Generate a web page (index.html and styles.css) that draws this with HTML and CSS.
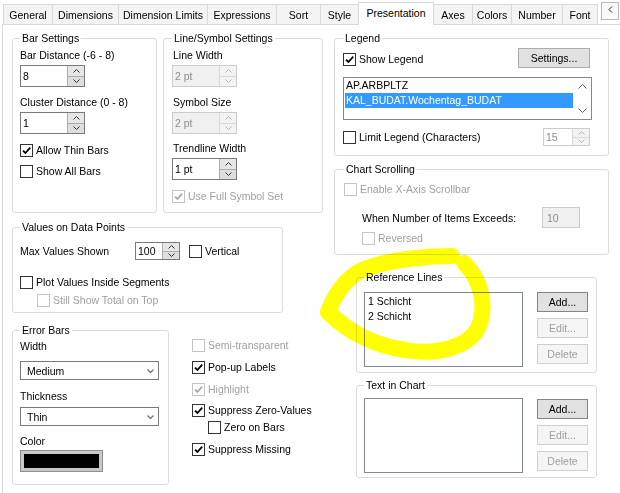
FILE: index.html
```html
<!DOCTYPE html>
<html>
<head>
<meta charset="utf-8">
<link rel="stylesheet" href="styles.css">
</head>
<body>
<div class="tabs">
  <div class="tab t-general">General</div>
  <div class="tab t-dims">Dimensions</div>
  <div class="tab t-dimlim">Dimension Limits</div>
  <div class="tab t-expr">Expressions</div>
  <div class="tab t-sort">Sort</div>
  <div class="tab t-style">Style</div>
  <div class="tab active t-pres">Presentation</div>
  <div class="tab t-axes">Axes</div>
  <div class="tab t-colors">Colors</div>
  <div class="tab t-number">Number</div>
  <div class="tab t-font">Font</div>
  <div class="scroll-btn"><svg width="5" height="7" viewBox="0 0 5 7"><path d="M4 0.5 1 3.5 4 6.5"/></svg></div>
</div>

<div class="page">
  <div class="col">
    <div class="row1">
      <fieldset class="box bar">
        <legend>Bar Settings</legend>
        <div class="lbl">Bar Distance (-6 - 8)</div>
        <div class="spin w65 mt3"><span class="val">8</span><span class="btns"><span class="sb"><svg viewBox="0 0 7 4"><path d="M0.5 3.5 3.5 0.5 6.5 3.5"/></svg></span><span class="sb"><svg viewBox="0 0 7 4"><path d="M0.5 0.5 3.5 3.5 6.5 0.5"/></svg></span></span></div>
        <div class="lbl mt9">Cluster Distance (0 - 8)</div>
        <div class="spin w65 mt3"><span class="val">1</span><span class="btns"><span class="sb"><svg viewBox="0 0 7 4"><path d="M0.5 3.5 3.5 0.5 6.5 3.5"/></svg></span><span class="sb"><svg viewBox="0 0 7 4"><path d="M0.5 0.5 3.5 3.5 6.5 0.5"/></svg></span></span></div>
        <div class="cbrow mt10"><span class="cb"><svg viewBox="0 0 11 11"><path d="M2 5.6 4.4 8 9.2 2.6"/></svg></span>Allow Thin Bars</div>
        <div class="cbrow mt8"><span class="cb"></span>Show All Bars</div>
      </fieldset>
      <fieldset class="box line">
        <legend>Line/Symbol Settings</legend>
        <div class="lbl">Line Width</div>
        <div class="spin w65 mt3 dis"><span class="val">2 pt</span><span class="btns"><span class="sb"><svg viewBox="0 0 7 4"><path d="M0.5 3.5 3.5 0.5 6.5 3.5"/></svg></span><span class="sb"><svg viewBox="0 0 7 4"><path d="M0.5 0.5 3.5 3.5 6.5 0.5"/></svg></span></span></div>
        <div class="lbl mt9">Symbol Size</div>
        <div class="spin w65 mt3 dis"><span class="val">2 pt</span><span class="btns"><span class="sb"><svg viewBox="0 0 7 4"><path d="M0.5 3.5 3.5 0.5 6.5 3.5"/></svg></span><span class="sb"><svg viewBox="0 0 7 4"><path d="M0.5 0.5 3.5 3.5 6.5 0.5"/></svg></span></span></div>
        <div class="lbl mt8">Trendline Width</div>
        <div class="spin w65 mt3"><span class="val">1 pt</span><span class="btns"><span class="sb"><svg viewBox="0 0 7 4"><path d="M0.5 3.5 3.5 0.5 6.5 3.5"/></svg></span><span class="sb"><svg viewBox="0 0 7 4"><path d="M0.5 0.5 3.5 3.5 6.5 0.5"/></svg></span></span></div>
        <div class="cbrow mt10 dis"><span class="cb"><svg viewBox="0 0 11 11"><path d="M2 5.6 4.4 8 9.2 2.6"/></svg></span>Use Full Symbol Set</div>
      </fieldset>
    </div>

    <fieldset class="box values">
      <legend>Values on Data Points</legend>
      <div class="maxrow">
        <span class="maxlbl">Max Values Shown</span>
        <div class="spin small w45"><span class="val">100</span><span class="btns"><span class="sb"><svg viewBox="0 0 7 4"><path d="M0.5 3.5 3.5 0.5 6.5 3.5"/></svg></span><span class="sb"><svg viewBox="0 0 7 4"><path d="M0.5 0.5 3.5 3.5 6.5 0.5"/></svg></span></span></div>
        <div class="cbrow vert"><span class="cb"></span>Vertical</div>
      </div>
      <div class="cbrow mt16"><span class="cb"></span>Plot Values Inside Segments</div>
      <div class="cbrow mt5 ind17 dis"><span class="cb"></span>Still Show Total on Top</div>
    </fieldset>

    <div class="row3">
      <fieldset class="box err">
        <legend>Error Bars</legend>
        <div class="lbl">Width</div>
        <div class="sel mt8"><span>Medium</span><svg viewBox="0 0 7 4"><path d="M0.5 0.5 3.5 3.5 6.5 0.5"/></svg></div>
        <div class="lbl mt10">Thickness</div>
        <div class="sel mt4"><span>Thin</span><svg viewBox="0 0 7 4"><path d="M0.5 0.5 3.5 3.5 6.5 0.5"/></svg></div>
        <div class="lbl mt9">Color</div>
        <div class="swatch mt2"><div class="swatch-fill"></div></div>
      </fieldset>
      <div class="checks">
        <div class="cbrow dis"><span class="cb"></span>Semi-transparent</div>
        <div class="cbrow mt9"><span class="cb"><svg viewBox="0 0 11 11"><path d="M2 5.6 4.4 8 9.2 2.6"/></svg></span>Pop-up Labels</div>
        <div class="cbrow mt9 dis"><span class="cb"><svg viewBox="0 0 11 11"><path d="M2 5.6 4.4 8 9.2 2.6"/></svg></span>Highlight</div>
        <div class="cbrow mt8"><span class="cb"><svg viewBox="0 0 11 11"><path d="M2 5.6 4.4 8 9.2 2.6"/></svg></span>Suppress Zero-Values</div>
        <div class="cbrow mt4 ind16"><span class="cb"></span>Zero on Bars</div>
        <div class="cbrow mt9"><span class="cb"><svg viewBox="0 0 11 11"><path d="M2 5.6 4.4 8 9.2 2.6"/></svg></span>Suppress Missing</div>
      </div>
    </div>
  </div>

  <div class="col">
    <fieldset class="box legendbox">
      <legend>Legend</legend>
      <div class="legrow">
        <div class="cbrow showleg"><span class="cb"><svg viewBox="0 0 11 11"><path d="M2 5.6 4.4 8 9.2 2.6"/></svg></span>Show Legend</div>
        <div class="btn settings">Settings...</div>
      </div>
      <div class="list leglist mt9">
        <div class="items">
          <div class="item">AP.ARBPLTZ</div>
          <div class="item picked">KAL_BUDAT.Wochentag_BUDAT</div>
        </div>
        <div class="vscroll">
          <span class="arr"><svg viewBox="0 0 9 5"><path d="M0.5 4.5 4.5 0.5 8.5 4.5"/></svg></span>
          <span class="arr"><svg viewBox="0 0 9 5"><path d="M0.5 0.5 4.5 4.5 8.5 0.5"/></svg></span>
        </div>
      </div>
      <div class="limrow mt8">
        <div class="cbrow"><span class="cb"></span>Limit Legend (Characters)</div>
        <div class="spin small w47 dis white"><span class="val">15</span><span class="btns"><span class="sb"><svg viewBox="0 0 7 4"><path d="M0.5 3.5 3.5 0.5 6.5 3.5"/></svg></span><span class="sb"><svg viewBox="0 0 7 4"><path d="M0.5 0.5 3.5 3.5 6.5 0.5"/></svg></span></span></div>
      </div>
    </fieldset>

    <fieldset class="box scrollbox">
      <legend>Chart Scrolling</legend>
      <div class="cbrow dis"><span class="cb"></span>Enable X-Axis Scrollbar</div>
      <div class="exrow mt11">
        <span class="exlbl">When Number of Items Exceeds:</span>
        <span class="dinput">10</span>
      </div>
      <div class="cbrow mt4 ind18 dis"><span class="cb"></span>Reversed</div>
    </fieldset>

    <fieldset class="box refbox">
      <legend>Reference Lines</legend>
      <div class="listrow">
        <div class="list reflist">
          <div class="item">1 Schicht</div>
          <div class="item">2 Schicht</div>
        </div>
        <div class="btncol">
          <div class="btn def">Add...</div>
          <div class="btn dis">Edit...</div>
          <div class="btn dis">Delete</div>
        </div>
      </div>
    </fieldset>

    <fieldset class="box textbox">
      <legend>Text in Chart</legend>
      <div class="listrow">
        <div class="list reflist"></div>
        <div class="btncol tb">
          <div class="btn def">Add...</div>
          <div class="btn dis">Edit...</div>
          <div class="btn dis">Delete</div>
        </div>
      </div>
    </fieldset>
  </div>
</div>

<svg class="marker" viewBox="0 0 620 493" width="620" height="493">
  <path d="M452 256 C425 256 386 260 362 270 C345 279 334 296 328 312 C343 327 366 344 405 350 C438 356 469 346 478 328 C487 308 482 280 464 263"/>
</svg>
</body>
</html>
```

FILE: styles.css
```css
* { box-sizing: border-box; }

body {
  margin: 0;
  width: 620px;
  height: 493px;
  overflow: hidden;
  position: relative;
  background: #fff;
  color: #000;
  font-family: "Liberation Sans", Arial, sans-serif;
  font-size: 10.5px;
}

/* ---------- tabs ---------- */
.tabs {
  display: flex;
  align-items: flex-end;
  height: 24px;
  padding-left: 3px;
  position: relative;
  z-index: 1;
}
.tab {
  height: 20px;
  margin-left: -1px;
  border: 1px solid #d9d9d9;
  border-bottom: none;
  background: #f4f4f4;
  display: flex;
  align-items: center;
  justify-content: center;
  white-space: nowrap;
}
.tab:first-child { margin-left: 0; }
.tab.active {
  height: 23px;
  margin-bottom: -1px;
  padding-bottom: 2px;
  background: #fff;
  position: relative;
}
.t-general { width: 50px; }
.t-dims { width: 67px; }
.t-dimlim { width: 90px; }
.t-expr { width: 70px; }
.t-sort { width: 45px; }
.t-style { width: 39px; }
.t-pres { width: 76px; }
.t-axes { width: 40px; }
.t-colors { width: 40px; }
.t-number { width: 52px; }
.t-font { width: 36px; }

.scroll-btn {
  align-self: flex-start;
  margin: 2px 0 0 3px;
  width: 18px;
  height: 18px;
  border: 1px solid #b9b9b9;
  background: #f9f9f9;
  display: flex;
  justify-content: center;
  padding-top: 3px;
}
.scroll-btn svg { width: 5px; height: 7px; }
.scroll-btn path { fill: none; stroke: #222; stroke-width: 1; }

/* ---------- page ---------- */
.page {
  margin-left: 2px;
  height: 469px;
  border-top: 1px solid #d9d9d9;
  border-left: 1px solid #d9d9d9;
  padding: 7px 0 0 9px;
  display: grid;
  grid-template-columns: 311px 275px;
  column-gap: 11px;
  align-items: start;
}
.col {
  display: flex;
  flex-direction: column;
  align-items: flex-start;
}

/* ---------- group boxes ---------- */
.box {
  margin: 0;
  min-width: 0;
  border: 1px solid #dcdcdc;
  border-radius: 3px;
  padding: 0 8px 0 7px;
}
.box > legend {
  padding: 0 2px;
  line-height: 12px;
  height: 12px;
}

.row1 { display: flex; gap: 6px; }
.bar { width: 145px; height: 181px; padding-top: 5px; }
.line { width: 160px; height: 181px; padding-top: 5px; padding-left: 8px; }
.line .lbl { padding-left: 1px; }

.values { width: 271px; height: 92px; margin-top: 8px; padding-top: 9px; }
.row3 { display: flex; align-items: flex-start; margin-top: 11px; }
.err { width: 157px; height: 161px; padding-top: 4px; }
.checks { margin-left: 23px; padding-top: 15px; }

.legendbox { width: 275px; height: 124px; padding: 4px 16px 0 8px; }
.scrollbox { width: 275px; height: 92px; margin-top: 7px; padding: 8px 16px 0 9px; }
.refbox { width: 241px; height: 102px; margin: 16px 0 0 22px; padding: 9px 0 0 7px; }
.textbox { width: 241px; height: 99px; margin: 6px 0 0 22px; padding: 7px 0 0 7px; }

/* ---------- spacing helpers ---------- */
.mt2 { margin-top: 2px; }
.mt3 { margin-top: 3px; }
.mt4 { margin-top: 4px; }
.mt5 { margin-top: 5px; }
.mt8 { margin-top: 8px; }
.mt9 { margin-top: 9px; }
.mt10 { margin-top: 10px; }
.mt11 { margin-top: 11px; }
.mt16 { margin-top: 16px; }
.ind16 { margin-left: 16px; }
.ind17 { margin-left: 17px; }
.ind18 { margin-left: 18px; }

/* ---------- labels & checkboxes ---------- */
.lbl { height: 13px; line-height: 13px; white-space: nowrap; }

.cbrow {
  display: flex;
  align-items: center;
  gap: 3px;
  height: 13px;
  line-height: 13px;
  white-space: nowrap;
}
.cb {
  width: 13px;
  height: 13px;
  flex: none;
  border: 1px solid #333;
  background: #fff;
  color: #000;
}
.cb svg { display: block; width: 11px; height: 11px; }
.cb path { fill: none; stroke: currentColor; stroke-width: 1.8; }
.dis { color: #a0a0a0; }
.dis .cb { border-color: #c4c4c4; color: #a8a8a8; }

/* ---------- spin boxes ---------- */
.spin {
  display: flex;
  height: 22px;
  border: 1px solid #7a7a7a;
  background: #fff;
}
.spin.small { height: 18px; }
.w65 { width: 65px; }
.w45 { width: 45px; }
.w47 { width: 47px; }
.spin .val {
  flex: 1;
  padding-left: 2px;
  display: flex;
  align-items: center;
}
.spin .btns {
  width: 17px;
  display: flex;
  flex-direction: column;
}
.spin .sb {
  flex: 1;
  border-left: 1px solid #adadad;
  background: #e6e6e6;
  display: flex;
  align-items: center;
  justify-content: center;
}
.spin .sb + .sb { border-top: 1px solid #adadad; background: #dedede; }
.spin .sb svg { width: 7px; height: 4px; display: block; }
.spin .sb path { fill: none; stroke: #333; stroke-width: 1; }

.spin.dis { border-color: #cccccc; }
.spin.dis .val { background: #f0f0f0; color: #8c8c8c; }
.spin.dis.white .val { background: #fff; }
.spin.dis .sb { border-color: #d9d9d9; background: #f3f3f3; }
.spin.dis .sb path { stroke: #b5b5b5; }

.maxrow { display: flex; align-items: center; height: 18px; }
.maxlbl { width: 115px; }
.vert { margin-left: 9px; }

/* ---------- combo / swatch ---------- */
.sel {
  width: 139px;
  height: 19px;
  border: 1px solid #7a7a7a;
  display: flex;
  align-items: center;
  justify-content: space-between;
  padding: 0 4px 0 6px;
}
.sel svg { width: 7px; height: 4px; }
.sel path { fill: none; stroke: #707070; stroke-width: 1.2; }

.swatch {
  width: 83px;
  height: 22px;
  border: 1px solid #8f8f8f;
  background: #c8c8c8;
  padding: 3px;
}
.swatch-fill { height: 100%; background: #000; }

/* ---------- buttons ---------- */
.btn {
  height: 20px;
  border: 1px solid #adadad;
  background: #e1e1e1;
  display: flex;
  align-items: center;
  justify-content: center;
  white-space: nowrap;
}
.btn.def { border-color: #858585; }
.btn.dis { background: #f5f5f5; border-color: #cfcfcf; color: #a0a0a0; }

/* ---------- legend box ---------- */
.legrow {
  display: flex;
  justify-content: space-between;
  height: 20px;
}
.showleg { align-self: flex-end; margin-bottom: 2px; }
.settings { width: 72px; margin-right: 2px; }

.list { border: 1px solid #828790; background: #fff; }
.leglist { display: flex; height: 43px; }
.items { flex: 1; padding-left: 1px; }
.item { height: 15px; line-height: 15px; padding-left: 1px; white-space: nowrap; }
.item.picked { background: #3399ff; color: #fff; }
.vscroll {
  width: 18px;
  display: flex;
  flex-direction: column;
  justify-content: space-between;
  padding-left: 1px;
}
.arr {
  height: 17px;
  display: flex;
  align-items: center;
  justify-content: center;
}
.arr svg { width: 9px; height: 5px; }
.arr path { fill: none; stroke: #606060; stroke-width: 1; }

.limrow {
  display: flex;
  align-items: center;
  justify-content: space-between;
  height: 18px;
}
.limrow .spin { margin-right: 2px; }

/* ---------- chart scrolling ---------- */
.exrow {
  display: flex;
  align-items: center;
  height: 21px;
  margin-left: 18px;
}
.exlbl { width: 180px; }
.dinput {
  width: 38px;
  height: 21px;
  border: 1px solid #cccccc;
  background: #f0f0f0;
  color: #8c8c8c;
  padding-left: 4px;
  display: flex;
  align-items: center;
}

/* ---------- reference lines / text in chart ---------- */
.listrow { display: flex; align-items: flex-start; }
.reflist { width: 159px; height: 75px; padding: 1px 0 0 3px; }
.reflist .item { padding-left: 0; }
.btncol {
  margin-left: 14px;
  width: 51px;
  display: flex;
  flex-direction: column;
  gap: 6px;
}
.btncol.tb { margin-top: 1px; }

/* ---------- highlighter scribble ---------- */
.marker {
  position: absolute;
  left: 0;
  top: 0;
  pointer-events: none;
  mix-blend-mode: multiply;
}
.marker path {
  fill: none;
  stroke: #ffff00;
  stroke-width: 16;
  stroke-linecap: round;
  stroke-linejoin: round;
}
```
